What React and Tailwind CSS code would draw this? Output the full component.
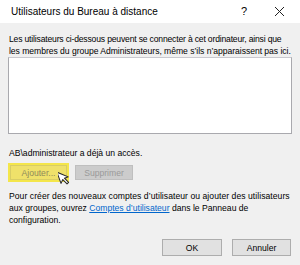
export default function App() {
  return (
    <div className="w-[300px] h-[265px] bg-[#f0f0f0] overflow-hidden text-[#000] font-['Liberation_Sans',Arial,sans-serif]">
      <div className="h-[23px] bg-white flex items-center pl-[11px] pr-[12px]">
        <div className="text-[10px] flex-1 whitespace-nowrap">Utilisateurs du Bureau à distance</div>
        <div className="text-[11px] w-[10px] text-center mr-[25px]">?</div>
        <svg width="11" height="11" viewBox="0 0 11 11" className="mr-[3px]">
          <path d="M1 1 L10 10 M10 1 L1 10" stroke="#222" strokeWidth="1" fill="none" />
        </svg>
      </div>
      <div className="px-[9px] text-[8.6px] leading-[12px]">
        <div className="mt-[10px] whitespace-nowrap">
          <div className="tracking-[-0.18px]">Les utilisateurs ci-dessous peuvent se connecter à cet ordinateur, ainsi que</div>
          <div className="tracking-[-0.04px]">les membres du groupe Administrateurs, même s’ils n’apparaissent pas ici.</div>
        </div>
        <div className="-ml-[1px] h-[77px] w-[284px] bg-white border border-[#a9a9ae] border-t-[#c9c9cf]"></div>
        <p className="mt-[13px] whitespace-nowrap">AB\administrateur a déjà un accès.</p>
        <div className="mt-[4px] flex items-center gap-[6px] relative">
          <div className="w-[61px] h-[19px] -ml-[1px] border-2 border-[#f4e64a] bg-[#efe16a] flex items-center justify-center">
            <div className="w-full h-full border border-[#d8cd66] flex items-center justify-center text-[#8f8a5c]">Ajouter...</div>
          </div>
          <div className="w-[58px] h-[15px] bg-[#cccccc] border border-[#bfbfbf] flex items-center justify-center text-[#9a9a9a]">Supprimer</div>
          <svg width="12" height="17" viewBox="0 0 12 17" className="absolute left-[49px] top-[6px]">
            <path d="M1 1 L1 13 L4 10 L6.5 15.5 L8.5 14.6 L6 9.3 L10 9.3 Z" fill="#fff" stroke="#222" strokeWidth="1" strokeLinejoin="round" transform="rotate(-20 6 8)" />
          </svg>
        </div>
        <div className="mt-[8px] whitespace-nowrap">
          <div className="tracking-[0.05px]">Pour créer des nouveaux comptes d’utilisateur ou ajouter des utilisateurs</div>
          <div>aux groupes, ouvrez <span className="text-[#0066cc] underline">Comptes d’utilisateur</span> dans le Panneau de</div>
          <div>configuration.</div>
        </div>
        <div className="mt-[13px] flex justify-end gap-[10px]">
          <div className="w-[60px] h-[17px] bg-[#e1e1e1] border border-[#adadad] flex items-center justify-center">OK</div>
          <div className="w-[59px] h-[17px] bg-[#e1e1e1] border border-[#adadad] flex items-center justify-center">Annuler</div>
        </div>
      </div>
    </div>
  );
}
